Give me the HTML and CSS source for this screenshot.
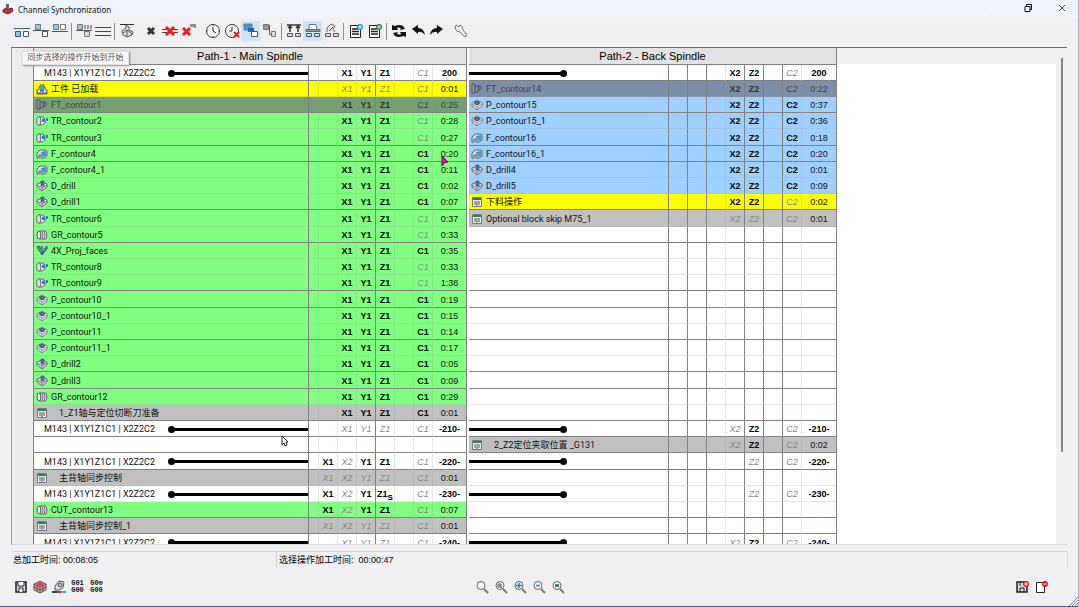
FILE: index.html
```html
<!DOCTYPE html>
<html lang="zh-CN">
<head>
<meta charset="utf-8">
<title>Channel Synchronization</title>
<link rel="stylesheet" href="styles.css">
</head>
<body>
<svg class="defs" aria-hidden="true">
  <symbol id="i-load" viewBox="0 0 12 12"><path d="M1 11V7h2V4h1V2h4v2h1v3h2v4z" fill="#fff" stroke="#556" /><path d="M4 3h4v5H4z" fill="#4a9bd8"/><path d="M1 10h10M4 8h4" stroke="#334"/></symbol>
  <symbol id="i-face" viewBox="0 0 12 12"><path d="M1 1h3v9H1zM4 3h3v6H4z" fill="#99a" stroke="#556"/><path d="M8 2l3 3-3 3z" fill="#68a" stroke="#556"/></symbol>
  <symbol id="i-turn" viewBox="0 0 12 12"><ellipse cx="3" cy="6" rx="2.300" ry="4.300" fill="#ddd" stroke="#667"/><path d="M4 2h3l2 3v3l-3 2H4q2-4 0-8z" fill="#eee" stroke="#667"/><path d="M6 4l3-1v4H6zM10 3h2v3h-2z" fill="#357fb4"/></symbol>
  <symbol id="i-mill" viewBox="0 0 12 12"><path d="M1 5l3-3h6l1 1v5l-3 2H5V7H3v3H1z" fill="#dde" stroke="#567"/><path d="M5 4l5-1v5l-4 1z" fill="#4497cc"/></symbol>
  <symbol id="i-pocket" viewBox="0 0 12 12"><path d="M1 4l5-3 5 3v3l-5 4-5-4z" fill="#eee" stroke="#778"/><path d="M1 5l5 3 5-3M6 8v3" fill="none" stroke="#889"/><ellipse cx="6" cy="4" rx="2.500" ry="1.500" fill="#3b86b8" stroke="#445"/></symbol>
  <symbol id="i-drill" viewBox="0 0 12 12"><path d="M1 4l5-2 5 2v3l-5 4-5-4z" fill="#ddd" stroke="#667"/><path d="M1 5l5 3 5-3M6 8v3" fill="none" stroke="#778"/><path d="M5 1h3v5H5z" fill="#357fa8" stroke="#445" stroke-width=".6"/></symbol>
  <symbol id="i-groove" viewBox="0 0 12 12"><ellipse cx="3" cy="6" rx="2" ry="4" fill="#eee" stroke="#556"/><path d="M4 2h6q2 4 0 8H4q2-4 0-8z" fill="#ddd" stroke="#667"/><path d="M6 2q2 4 0 8M8 2q2 4 0 8" fill="none" stroke="#778"/></symbol>
  <symbol id="i-axis" viewBox="0 0 12 12"><path d="M1 2l2-1 4 6-1 3zM11 1L7 6 6 10l5-6z" fill="#789" stroke="#356"/><path d="M5 1l2 3" stroke="#38a" stroke-width="2"/></symbol>
  <symbol id="i-code" viewBox="0 0 12 12"><path d="M1.500 1.500h9v9h-9z" fill="#eee" stroke="#778"/><path d="M2 2h8v2H2z" fill="#19904a"/><path d="M3 6h2M7 6h2M3 8h2M7 8h2M6 5v5" stroke="#555"/></symbol>
  <symbol id="i-lens" viewBox="0 0 14 14"><circle cx="6" cy="5.500" r="4" fill="#f8f8f8" stroke="#666"/><path d="M9 9l4 4" stroke="#777" stroke-width="2"/></symbol>
</svg>

<main class="window">
  <header class="titlebar">
    <svg class="ico" viewBox="0 0 12 12"><path d="M1 7l3-2 2 1 4-1 1 3-5 3-5-2z" fill="#b33" stroke="#722"/><path d="M4 1h3v4H4z" fill="#666"/></svg>
    <h1>Channel Synchronization</h1>
    <div class="caption">
      <button aria-label="Minimize"><svg viewBox="0 0 10 10"><path d="M1 5h7" stroke="#fff"/></svg></button>
      <button aria-label="Restore"><svg viewBox="0 0 10 10"><path d="M2 3.500h5v5H2zM3.500 3V1.500h5v5H7" fill="none" stroke="#111"/></svg></button>
      <button aria-label="Close"><svg viewBox="0 0 10 10"><path d="M2 2l6 6M8 2L2 8" stroke="#444"/></svg></button>
    </div>
  </header>

  <nav class="toolbar" aria-label="工具栏">
    <button class="hover" aria-label="同步选择的操作开始到开始"><svg viewBox="0 0 16 16"><path d="M0 5.500h16" stroke="#555"/><path d="M1.500 8.500h5v5h-5z" fill="#8cc8f0" stroke="#555"/><path d="M9.500 8.500h5v5h-5z" fill="#fff" stroke="#555"/></svg></button>
    <button aria-label="开始到结束"><svg viewBox="0 0 16 16"><path d="M0 7.500h16" stroke="#555"/><path d="M2.500 1.500h5v5h-5z" fill="#8cc8f0" stroke="#777"/><path d="M9.500 8.500h5v5h-5z" fill="#fff" stroke="#555"/></svg></button>
    <button aria-label="结束到结束"><svg viewBox="0 0 16 16"><path d="M0 8.500h16" stroke="#555"/><path d="M1.500 1.500h5v5h-5z" fill="#8cc8f0" stroke="#777"/><path d="M8.500 1.500h5v5h-5z" fill="#fff" stroke="#777"/></svg></button>
    <i class="sep line"></i>
    <button aria-label="等待"><svg viewBox="0 0 16 16"><path d="M0 7.500h16" stroke="#555"/><path d="M1.500 1.500h5v5h-5z" fill="#8cc8f0" stroke="#777"/><path d="M8 3h2M11 3h2M14 3h2M8 5h2M11 5h2M14 5h2" stroke="#444"/><path d="M8.500 8.500h5v5h-5z" fill="#ddd" stroke="#777"/></svg></button>
    <button aria-label="同步线"><svg viewBox="0 0 16 16"><path d="M0 4.500h16M0 8.500h16M0 12.500h16" stroke="#444"/></svg></button>
    <i class="sep line"></i>
    <button aria-label="机床"><svg viewBox="0 0 16 16"><path d="M1 1.500h14" stroke="#333"/><path d="M7 2v3l-4 3 1 4 4 2 5-2 1-3-4-2V4z" fill="#ddd" stroke="#555"/><path d="M4 10l4-3 5 4M8 7v6" fill="none" stroke="#555"/></svg></button>
    <i class="sep"></i>
    <button aria-label="删除"><svg viewBox="0 0 16 16"><path d="M5 5l6 6M11 5l-6 6" stroke="#333" stroke-width="3"/></svg></button>
    <button aria-label="删除同步"><svg viewBox="0 0 16 16"><path d="M0 6.500h16M0 9.500h16" stroke="#444"/><path d="M4 4l8 8M12 4l-8 8" stroke="#f01818" stroke-width="3"/></svg></button>
    <button aria-label="全部删除"><svg viewBox="0 0 16 16"><path d="M2 5l7 7M9 5l-7 7" stroke="#f01818" stroke-width="3"/><path d="M10 1v3M12 1v3M14 1v4" stroke="#333"/></svg></button>
    <i class="sep"></i>
    <button aria-label="计算时间"><svg viewBox="0 0 16 16"><circle cx="8" cy="8" r="6.500" fill="#fff" stroke="#333"/><path d="M8 4v4l3 2" fill="none" stroke="#222"/><path d="M8 2v1M8 13v1M2 8h1M13 8h1" stroke="#666"/></svg></button>
    <button aria-label="清除时间"><svg viewBox="0 0 16 16"><circle cx="8" cy="8" r="6.500" fill="#fff" stroke="#333"/><path d="M8 4v4H5" fill="none" stroke="#222"/><path d="M10 9l5 5M15 9l-5 5" stroke="#f01818" stroke-width="2"/></svg></button>
    <button class="active" aria-label="显示关联"><svg viewBox="0 0 16 16"><path d="M1 1h8v6H1z" fill="#3d9de0" stroke="#777"/><path d="M5 5h6v4H5z" fill="#156db5"/><path d="M8.500 8.500h6v5h-6z" fill="#fff" stroke="#555"/></svg></button>
    <button aria-label="显示层级"><svg viewBox="0 0 16 16"><path d="M1.500 1.500h5v5h-5z" fill="#999" stroke="#777"/><path d="M7.500 2v9.500h2" fill="none" stroke="#555"/><path d="M9.500 8.500h4v5h-4z" fill="#ddd" stroke="#777"/></svg></button>
    <i class="sep line"></i>
    <button aria-label="刀具"><svg viewBox="0 0 16 16"><path d="M1 2h14M4 2v7M12 2v7M2 5l2-2 2 2M10 5l2-2 2 2" fill="none" stroke="#333" stroke-width="1.500"/><path d="M1.500 10.500h5v3h-5zM9.500 10.500h5v3h-5z" fill="#b8dff5" stroke="#555"/></svg></button>
    <button class="active" aria-label="通道"><svg viewBox="0 0 16 16"><path d="M4 6V1.500h7l1 4.500" fill="#fff" stroke="#777"/><path d="M1 6.500h14v2H1z" fill="#999" stroke="#666"/><path d="M1.500 10.500h5v3h-5zM9.500 10.500h5v3h-5z" fill="#cde9fa" stroke="#555"/></svg></button>
    <button aria-label="主轴"><svg viewBox="0 0 16 16"><path d="M3 9V5l4-4 4 2-2 3 2 3" fill="#eee" stroke="#666"/><path d="M5 8l4-4" stroke="#444"/><path d="M1.500 10.500h5v3h-5zM9.500 10.500h5v3h-5z" fill="#ddd" stroke="#555"/></svg></button>
    <i class="sep line"></i>
    <button aria-label="插入代码"><svg viewBox="0 0 16 16"><path d="M2.500 2.500h10v12h-10z" fill="#fff" stroke="#222"/><path d="M4 6h6M4 8.500h7M4 11h7" stroke="#222" stroke-width="1.500"/><circle cx="12" cy="4" r="3" fill="#1995cc"/><path d="M10 4h4M12 2v4" stroke="#fff"/></svg></button>
    <button aria-label="插入操作"><svg viewBox="0 0 16 16"><path d="M2.500 2.500h10v12h-10z" fill="#fff" stroke="#222"/><path d="M4 6h6M4 8.500h7M4 11h7" stroke="#222" stroke-width="1.500"/><circle cx="12" cy="4" r="3" fill="#25804a"/><path d="M10 4h4M12 2v4" stroke="#cfc"/></svg></button>
    <i class="sep line"></i>
    <button aria-label="刷新"><svg viewBox="0 0 16 16"><path d="M1 2l3 1q4-2 8 0l2 3-5 1 1-2q-3-1-4 0l1 2H1zM15 14l-3-1q-4 2-8 0L2 10l5-1-1 2q3 1 4 0l-1-2h6z" fill="#111"/></svg></button>
    <button aria-label="撤销"><svg viewBox="0 0 16 16"><path d="M2 6l6-4v3q6 0 7 7-3-4-7-3v2z" fill="#111"/></svg></button>
    <button aria-label="重做"><svg viewBox="0 0 16 16"><path d="M14 6L8 2v3q-6 0-7 7 3-4 7-3v2z" fill="#111"/></svg></button>
    <i class="sep"></i>
    <button aria-label="设置"><svg viewBox="0 0 16 16"><path d="M3 2l3 2 1-2q3 1 3 5l4 5-2 2-5-5q-4 0-5-4z" fill="#eee" stroke="#777"/></svg></button>
  </nav>

  <section class="board">
    <div class="gutter"></div>
    <table id="path1" class="path path-main">
      <colgroup><col class="name"><col class="pad"><col class="axis" span="6"><col class="time"></colgroup>
      <thead><tr><th colspan="9">Path-1 - Main Spindle</th></tr></thead>
      <tbody></tbody>
    </table>
    <table id="path2" class="path path-back">
      <colgroup><col class="name2"><col class="axis" span="7"><col class="time"></colgroup>
      <thead><tr><th colspan="9">Path-2 - Back Spindle</th></tr></thead>
      <tbody></tbody>
    </table>
    <div class="canvas"></div>
    <div class="track"><div class="thumb"></div></div>
    <div class="tooltip" role="tooltip">同步选择的操作开始到开始</div>
    <svg class="cursor cursor-arrow" viewBox="0 0 8 12"><path d="M1 1v9l2-2 1 3 2-1-1-3h2z" fill="#fff" stroke="#222"/></svg>
    <svg class="cursor cursor-pick" viewBox="0 0 8 12"><path d="M1 1v10l2-3 4-1z" fill="#e010b0" stroke="#601050"/></svg>
  </section>

  <section class="status">
    <p>总加工时间: 00:08:05</p>
    <p>选择操作加工时间:&nbsp; 00:00:47</p>
  </section>

  <footer class="actions">
    <div class="group files">
      <button aria-label="保存"><svg viewBox="0 0 16 16"><path d="M3 3h10v10H3z" fill="#cfe0ec" stroke="#222" stroke-width="1.500"/><path d="M5 3v4h6V3M6 13v-4h4v4" fill="#fff" stroke="#222"/></svg></button>
      <button aria-label="模拟"><svg viewBox="0 0 16 16"><path d="M2 5l6-3 6 3v6l-6 3-6-3z" fill="#eaa" stroke="#555"/><path d="M4 5l4-2 4 2-4 2z" fill="#e33"/><path d="M2 5l6 3 6-3M8 8v6M5 7v5M11 7v5M2 8l6 3 6-3" fill="none" stroke="#644"/></svg></button>
      <button aria-label="机床模拟"><svg viewBox="0 0 16 16"><path d="M4 11V7l4-5 5 1-1 6-4 2z" fill="#ddd" stroke="#555"/><circle cx="9" cy="6" r="2" fill="#bbb" stroke="#555"/><path d="M1 13h5" stroke="#247" stroke-width="2"/><path d="M6 13h4" stroke="#e22" stroke-width="2"/><path d="M10 13h5" stroke="#4ac" stroke-width="2"/></svg></button>
      <button class="gcode">G01<br>G00</button>
      <button class="gcode">G0⊕<br>G00</button>
    </div>
    <div class="group">
      <button aria-label="缩放"><svg viewBox="0 0 14 14"><use href="#i-lens"/></svg></button>
      <button aria-label="窗口缩放"><svg viewBox="0 0 14 14"><use href="#i-lens"/><path d="M4 4h3v3H4zM5 5l3 3" fill="none" stroke="#555"/></svg></button>
      <button aria-label="放大"><svg viewBox="0 0 14 14"><use href="#i-lens"/><path d="M3 5.500h6M6 3v5" stroke="#1780d8" stroke-width="1.500"/></svg></button>
      <button aria-label="缩小"><svg viewBox="0 0 14 14"><use href="#i-lens"/><path d="M4 5.500h4" stroke="#1780d8" stroke-width="1.500"/></svg></button>
      <button aria-label="适合"><svg viewBox="0 0 14 14"><use href="#i-lens"/><path d="M4 5.500h4" stroke="#18804a" stroke-width="2.500"/></svg></button>
    </div>
    <div class="group end">
      <button aria-label="保存并退出"><svg viewBox="0 0 16 16"><path d="M3 3h10v10H3z" fill="#cfe0ec" stroke="#222" stroke-width="1.500"/><path d="M6 3v4M6 13V9h4v4" fill="none" stroke="#222"/><circle cx="12" cy="5" r="3" fill="#e81020"/><path d="M10 5h4M12 3v4" stroke="#fff"/></svg></button>
      <button aria-label="退出"><svg viewBox="0 0 16 16"><path d="M3.500 3.500h8v10h-8z" fill="#fff" stroke="#222"/><circle cx="12" cy="5" r="3" fill="#e81020"/><path d="M10 5h4" stroke="#fff"/></svg></button>
    </div>
    <svg class="grip" viewBox="0 0 10 10"><path d="M1 10l9-9M4 10l6-6M7 10l3-3" stroke="#888"/></svg>
  </footer>
</main>
<script src="app.js"></script>
</body>
</html>
```

FILE: styles.css
```css
* { box-sizing: border-box; }

body {
  margin: 0;
  font-family: "Liberation Sans", "Noto Sans CJK SC", sans-serif;
  font-size: 9px;
  color: #111;
}

.defs { position: absolute; width: 0; height: 0; }

button {
  padding: 0;
  border: 0;
  background: none;
  font: inherit;
  color: inherit;
}

.window {
  display: flex;
  flex-direction: column;
  height: 100vh;
  background: #f0f0f2;
  border-right: 1px solid #9fb4bc;
  border-bottom: 1px solid #2a62c4;
}

.titlebar {
  display: flex;
  align-items: center;
  height: 18px;
  padding: 0 6px 0 2px;
  gap: 4px;
  background: #eff4fc;
}
.titlebar .ico { width: 12px; height: 12px; }
.titlebar h1 {
  margin: 0;
  font: 8px "Noto Sans", sans-serif;
}
.caption { display: flex; gap: 14px; margin-left: auto; }
.caption button { width: 20px; height: 18px; }
.caption svg { width: 10px; height: 10px; }

.toolbar {
  display: flex;
  align-items: center;
  height: 29px;
  padding: 0 12px 3px;
}
.toolbar button, .actions button {
  display: grid;
  place-items: center;
  width: 19px;
  height: 20px;
}
.toolbar svg, .actions button svg { width: 16px; height: 16px; }
.toolbar .hover { background: #e8f2fa; }
.toolbar .active { background: #cce6f7; }
.sep { display: flex; justify-content: center; width: 5px; height: 17px; }
.sep.line::before { content: ""; width: 1px; background: #909090; }

.board {
  position: relative;
  display: flex;
  align-items: flex-start;
  flex: 1;
  min-height: 0;
  margin: 0 11px 0 11px;
  overflow: hidden;
  border-top: 1px solid #6c6c70;
  border-left: 1px solid #9a9a9e;
  border-bottom: 1px solid #dcdce0;
}
.gutter { width: 21px; align-self: stretch; background: #ececec; }

.path {
  flex: none;
  table-layout: fixed;
  border-collapse: separate;
  border-spacing: 0;
  background: #fff;
}
.path-main { width: 434px; border-left: 1px solid #808084; border-right: 1px solid #808084; }
.path-back { width: 370px; border-left: 2px solid #fff; border-right: 1px solid #808084; }
.name { width: 275px; }
.name2 { width: 200px; }
.pad { width: 10px; }
.axis { width: 19px; }
.path th {
  height: 17px;
  padding: 0;
  background: #e2e2e3;
  border-bottom: 1px solid #808084;
  font-size: 11px;
  font-weight: normal;
  line-height: 14px;
  color: #000;
}
.path td {
  height: 16px;
  padding: 1px 0 0;
  border-right: 1px solid rgba(150, 150, 150, 0.25);
  border-bottom: 1px solid rgba(150, 150, 150, 0.25);
  line-height: 14px;
  text-align: center;
  white-space: nowrap;
}
.path tr:nth-child(5n) td { height: 17px; }
.path .rule td { border-bottom-color: #808084; }
.path td:last-child { border-right: 0; }
.path-main td:nth-child(1), .path-main td:nth-child(5) { border-right-color: #808084; }
.path-back td:nth-child(1), .path-back td:nth-child(2), .path-back td:nth-child(3),
.path-back td:nth-child(5), .path-back td:nth-child(6), .path-back td:nth-child(7) { border-right-color: #808084; }
.path td.op { text-align: left; font-family: Roboto, "Noto Sans CJK SC", sans-serif; }

.op-line { display: flex; align-items: center; gap: 3px; height: 14px; padding-left: 2px; }
.op-line svg { flex: none; width: 12px; height: 12px; }
.op-line .indent { padding-left: 8px; }
.link { display: flex; align-items: center; height: 14px; }
.link .codes { width: 137px; padding-left: 10px; }
.bar { position: relative; flex: 1; height: 3px; background: #000; }
.bar::before {
  content: "";
  position: absolute;
  top: -2px;
  left: -3px;
  width: 7px;
  height: 7px;
  border-radius: 50%;
  background: #000;
}
.path-back .bar { flex: none; width: 95px; }
.path-back .bar::before { left: auto; right: -3px; }

.green td { background: #80ff80; }
.blue td { background: #a0d0ff; }
.yellow td { background: #ffff00; }
.gray td { background: #c0c0c0; }
.picked td { background: #739f73; color: #444; }
.picked-back td { background: #7c8fa8; color: #444; }

.on { font-weight: bold; color: #000; }
.off { font-style: italic; color: #888; }
.picked .on, .picked-back .on { color: #333; }
.sync-no { font-weight: bold; color: #000; }
sub { font-size: 8px; line-height: 0; }

.canvas { flex: 1; align-self: stretch; background: #fff; border-top: 16px solid #f0f0f2; }
.track { display: flex; justify-content: center; align-self: stretch; width: 11px; padding-top: 10px; }
.thumb { width: 2px; height: 81%; background: #858588; }

.tooltip {
  position: absolute;
  top: 3px;
  left: 10px;
  width: 107px;
  padding: 0 2px;
  background: #fafafa;
  border: 1px solid #e0e0e0;
  box-shadow: 1px 1px 2px #888;
  font-size: 8px;
  line-height: 12px;
  text-align: center;
  color: #555;
}
.cursor { position: absolute; width: 8px; height: 12px; }
.cursor-arrow { left: 269px; top: 387px; }
.cursor-pick { left: 429px; top: 107px; }

.status {
  display: flex;
  height: 17px;
  margin: 6px 10px 0 12px;
  border-top: 1px solid #d6d6d8;
  border-right: 1px solid #d6d6d8;
}
.status p { margin: 0; padding-left: 1px; line-height: 17px; color: #000; }
.status p:first-child { width: 264px; }
.status p + p { border-left: 1px solid #d0d0d2; padding-left: 2px; }

.actions {
  position: relative;
  display: flex;
  align-items: center;
  height: 38px;
  padding: 0 28px 0 11px;
}
.group { display: flex; }
.files { width: 461px; }
.end { margin-left: auto; }
.actions .group + .group:not(.end) svg { width: 14px; height: 14px; }
.actions .gcode { font: bold 7px/7px "Liberation Mono", monospace; }
.grip { position: absolute; right: 0; bottom: 0; width: 10px; height: 10px; }
```

FILE: app.js
```js
const CODES = "M143 | X1Y1Z1C1 | X2Z2C2";

/* Rows followed by a strong rule in both paths. */
const RULES = new Set([0, 2, 4, 5, 8, 10, 13, 14, 16, 18, 19, 21, 22, 23, 24, 27, 28]);

/* [kind, icon, label, axes, time]; a leading "-" marks an idle axis. */
const XYZ = ["", "", "X1", "Y1", "Z1", "", "-C1"];
const XYZC = ["", "", "X1", "Y1", "Z1", "", "C1"];
const IDLE = ["", "", "-X1", "-Y1", "-Z1", "", "-C1"];
const IDLE_CROSS = ["", "-X1", "-X2", "-Y1", "-Z1", "", "-C1"];
const CROSS = ["", "X1", "-X2", "Y1", "Z1", "", "-C1"];
const main = [
  ["sync", "", CODES, XYZ, "200"],
  ["yellow", "load", "工件 已加载", IDLE, "0:01"],
  ["picked", "face", "FT_contour1", XYZ, "0:25"],
  ["green", "turn", "TR_contour2", XYZ, "0:28"],
  ["green", "turn", "TR_contour3", XYZ, "0:27"],
  ["green", "mill", "F_contour4", XYZC, "0:20"],
  ["green", "mill", "F_contour4_1", XYZC, "0:11"],
  ["green", "drill", "D_drill", XYZC, "0:02"],
  ["green", "drill", "D_drill1", XYZC, "0:07"],
  ["green", "turn", "TR_contour6", XYZ, "0:37"],
  ["green", "groove", "GR_contour5", XYZ, "0:33"],
  ["green", "axis", "4X_Proj_faces", XYZC, "0:35"],
  ["green", "turn", "TR_contour8", XYZ, "0:33"],
  ["green", "turn", "TR_contour9", XYZ, "1:38"],
  ["green", "pocket", "P_contour10", XYZC, "0:19"],
  ["green", "pocket", "P_contour10_1", XYZC, "0:15"],
  ["green", "pocket", "P_contour11", XYZC, "0:14"],
  ["green", "pocket", "P_contour11_1", XYZC, "0:17"],
  ["green", "drill", "D_drill2", XYZC, "0:05"],
  ["green", "drill", "D_drill3", XYZC, "0:09"],
  ["green", "groove", "GR_contour12", XYZC, "0:29"],
  ["gray", "code", " 1_Z1轴与定位切断刀准备", XYZC, "0:01"],
  ["sync", "", CODES, IDLE, "-210-"],
  ["empty"],
  ["sync", "", CODES, CROSS, "-220-"],
  ["gray", "code", " 主背轴同步控制", IDLE_CROSS, "0:01"],
  ["sync", "", CODES, ["", "X1", "-X2", "Y1", "Z1<sub>S</sub>", "", "-C1"], "-230-"],
  ["green", "groove", "CUT_contour13", CROSS, "0:07"],
  ["gray", "code", " 主背轴同步控制_1", IDLE_CROSS, "0:01"],
  ["sync", "", CODES, IDLE, "-240-"]
];

const XZC = ["", "", "", "X2", "Z2", "", "C2"];
const XZ = ["", "", "", "X2", "Z2", "", "-C2"];
const Z_ONLY = ["", "", "", "-X2", "Z2", "", "-C2"];
const Z_IDLE = ["", "", "", "", "-Z2", "", "-C2"];
const back = [
  ["sync", "", "", XZ, "200"],
  ["picked-back", "face", "FT_contour14", XZ, "0:22"],
  ["blue", "pocket", "P_contour15", XZC, "0:37"],
  ["blue", "pocket", "P_contour15_1", XZC, "0:36"],
  ["blue", "mill", "F_contour16", XZC, "0:18"],
  ["blue", "mill", "F_contour16_1", XZC, "0:20"],
  ["blue", "drill", "D_drill4", XZC, "0:01"],
  ["blue", "drill", "D_drill5", XZC, "0:09"],
  ["yellow", "code", "下料操作", XZ, "0:02"],
  ["gray", "code", "Optional block skip M75_1", ["", "", "", "-X2", "-Z2", "", "-C2"], "0:01"],
  ...Array.from({ length: 12 }, () => ["empty"]),
  ["sync", "", "", Z_ONLY, "-210-"],
  ["gray", "code", " 2_Z2定位夹取位置 _G131", Z_ONLY, "0:02"],
  ["sync", "", "", Z_IDLE, "-220-"],
  ["empty"],
  ["sync", "", "", Z_IDLE, "-230-"],
  ["empty"],
  ["empty"],
  ["sync", "", "", Z_ONLY, "-240-"]
];

function axisCell(axis) {
  if (!axis) return "<td></td>";
  return axis[0] === "-" ? `<td class="off">${axis.slice(1)}</td>` : `<td class="on">${axis}</td>`;
}

function opCell(kind, icon, label) {
  if (kind === "empty") return "<td></td>";
  if (kind === "sync") {
    const codes = label ? `<span class="codes">${label}</span>` : "";
    return `<td class="op"><div class="link">${codes}<span class="bar"></span></div></td>`;
  }
  const indent = label[0] === " " ? ' class="indent"' : "";
  return `<td class="op"><div class="op-line"><svg><use href="#i-${icon}"/></svg><span${indent}>${label.trim()}</span></div></td>`;
}

function fill(id, rows) {
  document.querySelector(`#${id} tbody`).innerHTML = rows.map(([kind, icon, label, axes, time], i) => {
    const cells = (axes || Array(7).fill("")).map(axisCell).join("");
    const timeClass = kind === "sync" ? ' class="sync-no"' : "";
    return `<tr class="${kind}${RULES.has(i) ? " rule" : ""}">${opCell(kind, icon, label)}${cells}<td${timeClass}>${time || ""}</td></tr>`;
  }).join("");
}

fill("path1", main);
fill("path2", back);
```
